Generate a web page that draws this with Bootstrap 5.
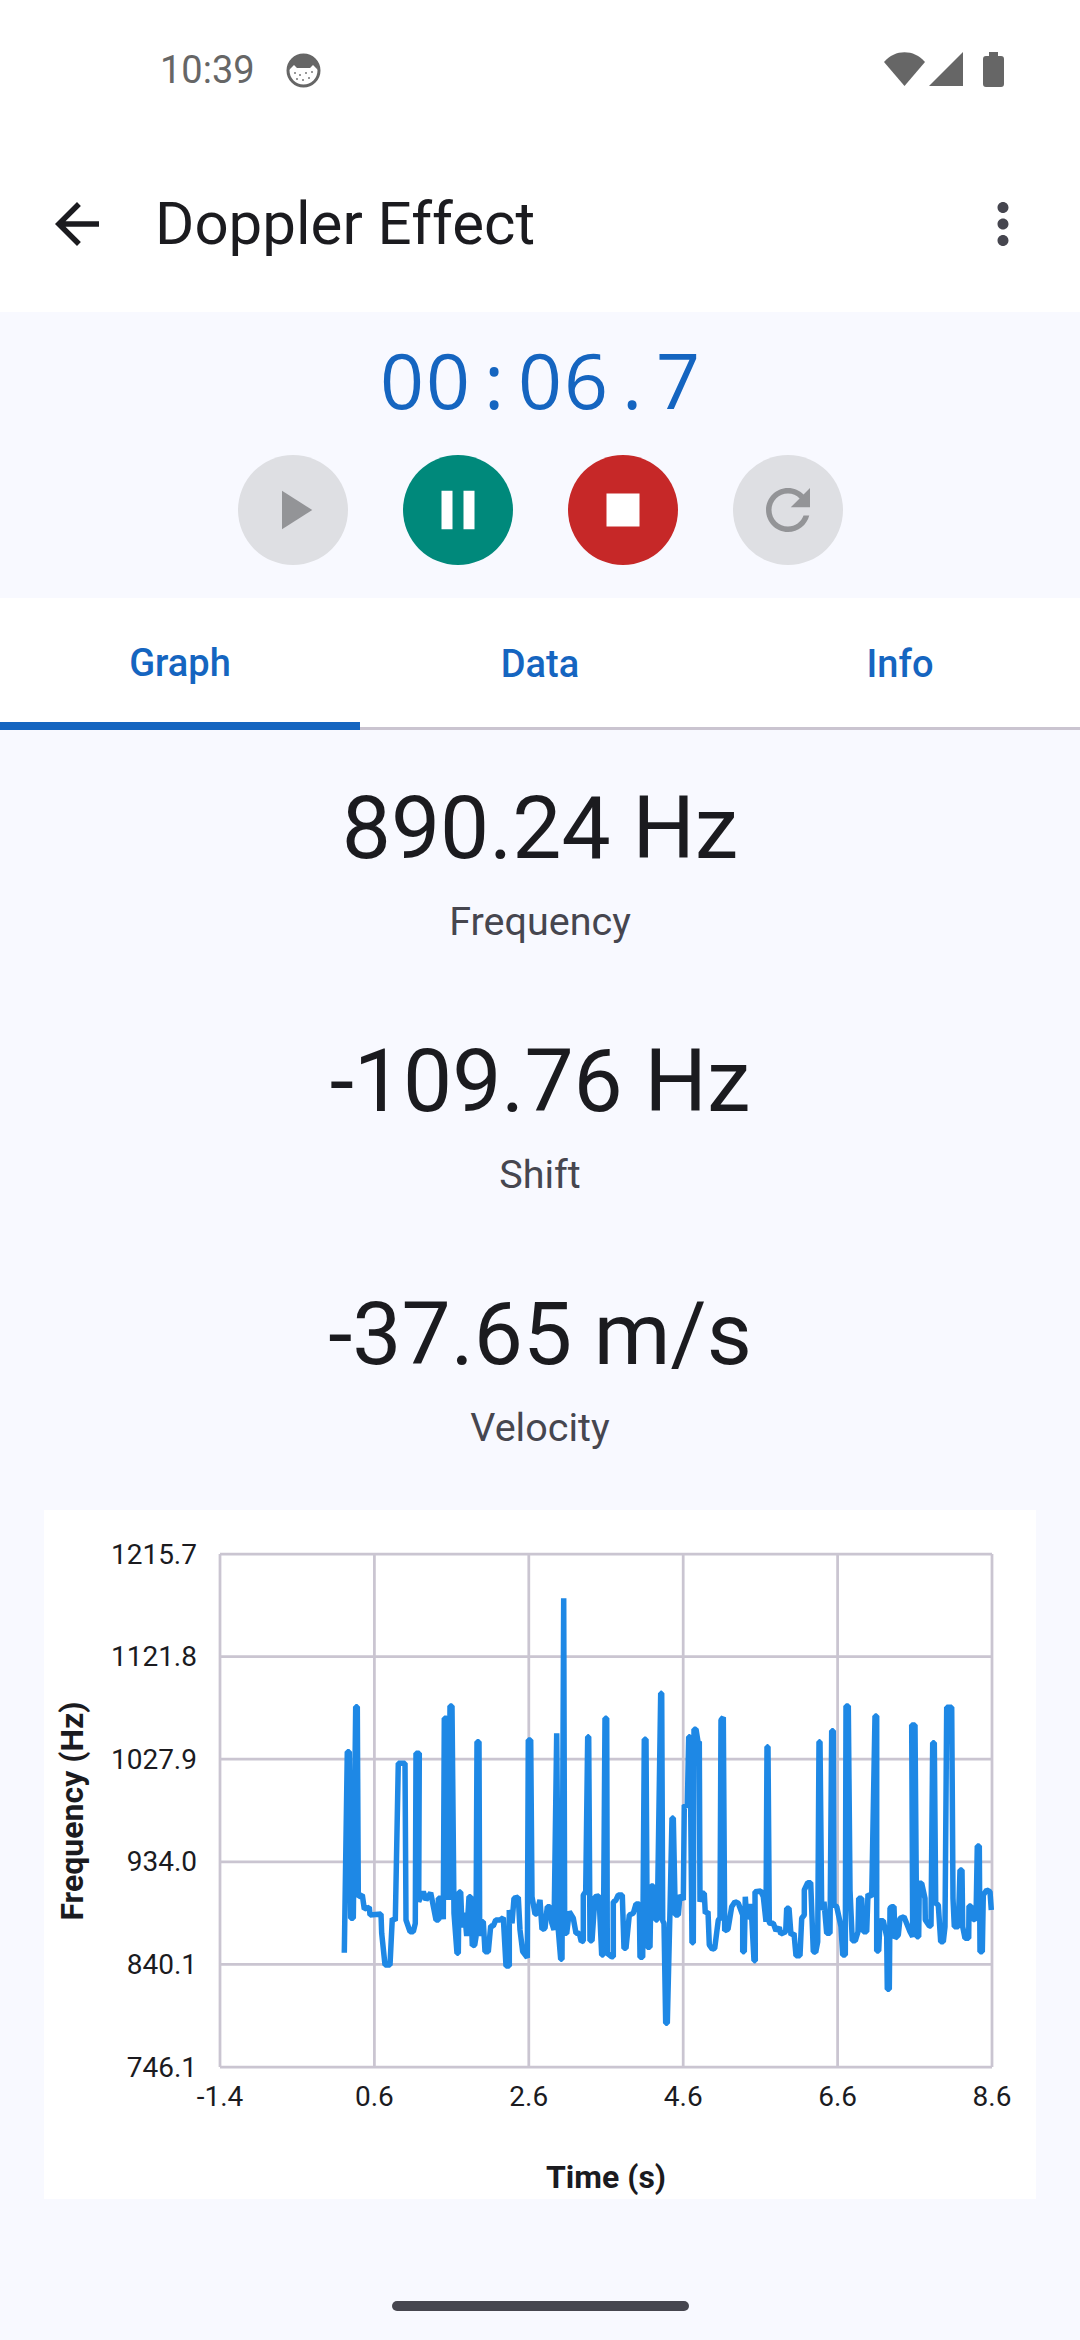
<!DOCTYPE html>
<html lang="en">
<head>
  <meta charset="UTF-8">
  <meta name="viewport" content="width=device-width, initial-scale=1.0">
  <title>Doppler Effect</title>
  <link href="https://cdn.jsdelivr.net/npm/bootstrap@5.3.3/dist/css/bootstrap.min.css" rel="stylesheet"/>
  <style>
    body { width: 1080px; height: 2340px; overflow: hidden; background: #f8f9ff; font-family: Roboto, sans-serif; color: #1b1b1f; }
    .status-bar { height: 140px; padding: 0 76px 0 160px; background: #fff; color: #666; }
    .status-time { font-size: 38px; font-weight: 400; line-height: 1; margin-right: 31px; }
    .app-bar { height: 172px; background: #fff; padding: 0 44px 4px 44px; }
    .app-title { font-size: 60px; line-height: 1; margin: 0 0 0 45px; font-weight: 400; }
    .ico-66 { width: 66px; height: 66px; display: block; }
    .timer-panel { height: 286px; }
    .clock { height: 143px; color: #1565c0; font-family: "Open Sans", sans-serif; font-size: 77px; font-weight: 500; line-height: 1; padding-bottom: 8px; }
    .clock span { width: 46px; text-align: center; }
    .btn-round { width: 110px; height: 110px; padding: 0; border: 0; border-radius: 50%; display: flex; align-items: center; justify-content: center; }
    .btn-off { background: #dedfe3; fill: #939497; }
    .btn-pause { background: #00897b; fill: #fff; }
    .btn-stop { background: #c62828; fill: #fff; }
    .gap-55 { gap: 55px; }
    .tab-strip { height: 132px; background: #fff; border-bottom: 3px solid #cac4d0; }
    .tab-strip .nav-link { height: 132px; padding: 7px 0; border-radius: 0; color: #1565c0; font-size: 38px; font-weight: 500; display: flex; align-items: center; justify-content: center; background: transparent; }
    .tab-strip .nav-link.active { border-bottom: 8px solid #1565c0; padding-bottom: 0; color: #1565c0; background: transparent; }
    .stats { padding-top: 48px; }
    .stat-block { margin-bottom: 84px; text-align: center; }
    .stat-block:last-child { margin-bottom: 0; }
    .stat-value { font-size: 87.500px; line-height: 100px; height: 100px; }
    .stat-label { font-size: 39.500px; line-height: 50px; height: 50px; margin-top: 19px; color: #46464f; }
    .chart-box { width: 992px; height: 689px; margin: 57px 0 0 44px; background: #fff; border: 0; border-radius: 0; }
    .chart-box svg { display: block; }
    .grid-line { stroke: #cac5d1; stroke-width: 2.750; fill: none; }
    .tick { font-family: Roboto, sans-serif; font-size: 28px; fill: #1b1b1f; }
    .axis-title { font-family: Roboto, sans-serif; font-size: 32px; font-weight: 700; fill: #1b1b1f; }
    .data-line { fill: none; stroke: #1e88e5; stroke-width: 5.500; stroke-linejoin: bevel; }
    .home-handle { width: 297px; height: 10px; margin: 102px auto 0; background: #46464f; border-radius: 5px; }
  </style>
</head>
<body>

  <div class="status-bar d-flex align-items-center">
    <span class="status-time">10:39</span>
    <svg width="35" height="35" viewBox="0 0 35 35">
      <circle cx="17.500" cy="17.500" r="15.500" fill="#fff" stroke="#666" stroke-width="3"/>
      <path d="M3 17 C3 6 10 2 17.500 2 C25 2 32 6 32 17 L27 12 L24 15 L11 15 L8 12 Z" fill="#666"/>
      <g fill="#777">
        <circle cx="9" cy="20" r="1"/><circle cx="14" cy="22" r="1"/><circle cx="20" cy="20" r="1"/><circle cx="26" cy="19" r="1"/>
        <circle cx="11" cy="26" r="1"/><circle cx="17" cy="27" r="1"/><circle cx="23" cy="25" r="1"/>
      </g>
    </svg>
    <div class="ms-auto d-flex align-items-start">
      <svg width="120" height="36" viewBox="0 0 120 36" fill="#666">
        <path d="M0 10 C11 -3 30 -3 41 10 L20.500 34 Z"/>
        <path d="M79 0 V34 H45 Z"/>
        <path d="M105 0 H114 V4 H117 Q120 4 120 7 V32 Q120 35 117 35 H102 Q99 35 99 32 V7 Q99 4 102 4 H105 Z"/>
      </svg>
    </div>
  </div>

  <div class="app-bar d-flex align-items-center">
    <svg class="ico-66" viewBox="0 0 24 24" fill="#1b1b1f"><path d="M20 11H7.830l5.590-5.590L12 4l-8 8 8 8 1.410-1.410L7.830 13H20v-2z"/></svg>
    <h1 class="app-title">Doppler Effect</h1>
    <svg class="ico-66 ms-auto" viewBox="0 0 24 24" fill="#46464f"><path d="M12 8c1.100 0 2-.9 2-2s-.9-2-2-2-2 .9-2 2 .9 2 2 2zm0 2c-1.100 0-2 .9-2 2s.9 2 2 2 2-.9 2-2-.9-2-2-2zm0 6c-1.100 0-2 .9-2 2s.9 2 2 2 2-.9 2-2-.9-2-2-2z"/></svg>
  </div>

  <div class="timer-panel">
    <div class="clock d-flex justify-content-center align-items-center">
      <span>0</span><span>0</span><span>:</span><span>0</span><span>6</span><span>.</span><span>7</span>
    </div>
    <div class="d-flex justify-content-center gap-55">
      <button class="btn-round btn-off" type="button"><svg class="ico-66" viewBox="0 0 24 24"><path d="M8 5v14l11-7z"/></svg></button>
      <button class="btn-round btn-pause" type="button"><svg class="ico-66" viewBox="0 0 24 24"><path d="M6 19h4V5H6v14zm8-14v14h4V5h-4z"/></svg></button>
      <button class="btn-round btn-stop" type="button"><svg class="ico-66" viewBox="0 0 24 24"><path d="M6 6h12v12H6z"/></svg></button>
      <button class="btn-round btn-off" type="button"><svg class="ico-66" viewBox="0 0 24 24"><path d="M17.650 6.350C16.200 4.900 14.210 4 12 4c-4.420 0-7.990 3.580-7.990 8s3.570 8 7.990 8c3.730 0 6.840-2.550 7.730-6h-2.080c-.82 2.330-3.040 4-5.650 4-3.310 0-6-2.690-6-6s2.690-6 6-6c1.660 0 3.140.69 4.220 1.780L13 11h7V4l-2.350 2.350z"/></svg></button>
    </div>
  </div>

  <ul class="nav nav-justified tab-strip">
    <li class="nav-item"><a class="nav-link active" href="#">Graph</a></li>
    <li class="nav-item"><a class="nav-link" href="#">Data</a></li>
    <li class="nav-item"><a class="nav-link" href="#">Info</a></li>
  </ul>

  <div class="stats">
    <div class="stat-block"><div class="stat-value">890.24 Hz</div><div class="stat-label">Frequency</div></div>
    <div class="stat-block"><div class="stat-value">-109.76 Hz</div><div class="stat-label">Shift</div></div>
    <div class="stat-block"><div class="stat-value">-37.65 m/s</div><div class="stat-label">Velocity</div></div>
  </div>

  <div class="card chart-box">
    <svg id="chart" width="992" height="689" viewBox="0 0 992 689"></svg>
  </div>

  <div class="home-handle"></div>

  <script>
    const NS = 'http://www.w3.org/2000/svg';
    const chart = document.getElementById('chart');

    // plot area in the box's own pixels
    const plot = { left: 176, right: 948, top: 44, bottom: 557 };
    const xLabels = ['-1.4', '0.6', '2.6', '4.6', '6.6', '8.6'];
    const yLabels = ['1215.7', '1121.8', '1027.9', '934.0', '840.1', '746.1'];

    function add(tag, attrs, text) {
      const el = document.createElementNS(NS, tag);
      Object.keys(attrs).forEach(k => el.setAttribute(k, attrs[k]));
      if (text) el.textContent = text;
      chart.appendChild(el);
      return el;
    }

    xLabels.forEach((label, i) => {
      const x = plot.left + (plot.right - plot.left) * i / 5;
      add('line', { class: 'grid-line', x1: x, x2: x, y1: plot.top, y2: plot.bottom });
      add('text', { class: 'tick', x: x, y: 596, 'text-anchor': 'middle' }, label);
    });
    yLabels.forEach((label, i) => {
      const y = plot.top + (plot.bottom - plot.top) * i / 5;
      add('line', { class: 'grid-line', x1: plot.left, x2: plot.right, y1: y, y2: y });
      add('text', { class: 'tick', x: 153, y: y + 9.500, 'text-anchor': 'end' }, label);
    });
    add('text', { class: 'axis-title', x: 562, y: 678, 'text-anchor': 'middle' }, 'Time (s)');
    add('text', { class: 'axis-title', x: 0, y: 0, 'text-anchor': 'middle', transform: 'translate(39 301) rotate(-90)' }, 'Frequency (Hz)');

    // traced in three runs, each relative to its own origin at 3x
    const runs = [
      { x: 330, y: 1690, pts: [43,788,52,185,58,185,62,685,70,685,77,50,82,50,85,620,97,615,103,657,118,652,120,675,153,672,155,730,165,825,180,825,187,685,196,692,205,220,225,220,228,690,240,725,250,725,256,700,258,190,268,190,266,635,280,605,288,630,302,608,318,690,326,690,325,625,334,625,340,688,343,85,350,85,356,630,360,48,366,48,372,670,381,790,385,790,387,606,392,606,396,712,404,668,410,738,417,620,422,620,427,767,434,765,438,740,441,155,447,155,449,738,452,695,460,695,465,785,475,785,482,708,490,708,497,690,510,690,520,683,528,828,538,828,538,660,546,700,552,625,565,622,570,720,578,785,592,803,595,150,602,150,606,620,615,672,620,672,630,630,636,718,645,715,652,650,660,650,665,698,672,720,680,130,685,720,692,808] },
      { x: 550, y: 1590, pts: [36,1108,41,25,44,1030,50,1030,58,965,70,985,78,1030,88,1030,94,1055,100,1052,100,915,107,905,113,440,116,440,120,1052,126,1052,135,920,147,918,155,1095,160,1095,165,385,170,385,172,1090,185,1100,190,1100,190,935,197,932,205,915,217,915,222,1075,228,1075,238,975,250,970,258,942,268,942,270,1102,278,1102,283,448,288,448,292,1072,300,1072,303,888,310,888,317,990,322,990,332,310,335,310,338,992,342,1000,347,1300,352,1300,360,960,366,684,370,684,376,975,385,975,390,915,400,930,403,645,412,650,416,440,420,440,426,1058,430,1058,432,418,438,418,444,455,448,455,450,935,458,910,463,910,466,970,474,965,478,1065,487,1078,494,1075,505,990,510,985,513,390,520,382,524,1022,534,1018,545,950,555,935,565,940,578,975,578,1085,583,1085,586,920,590,985,600,970,603,942,612,1112,616,1112,615,905,632,903,640,920,648,995,651,470,654,470,658,998] },
      { x: 770, y: 1690, pts: [0,700,10,700,18,722,28,712,32,732,47,725,50,655,57,655,63,735,72,730,78,797,90,797,95,685,103,675,103,600,113,578,122,578,130,785,137,787,143,755,147,155,150,155,155,660,162,635,170,730,180,730,185,122,190,122,192,645,200,650,213,710,218,795,226,795,228,48,235,48,240,600,247,752,256,752,264,725,266,625,275,625,280,725,290,725,294,612,305,620,315,78,320,78,320,783,326,783,330,692,340,692,350,740,352,898,358,898,360,655,365,650,372,650,375,745,385,735,390,685,402,680,420,725,428,740,425,105,435,105,440,740,446,740,448,580,455,580,465,625,466,690,478,708,483,708,488,158,493,158,497,640,505,645,512,755,520,755,525,710,530,52,545,52,549,625,553,710,565,710,570,540,576,540,578,710,585,745,596,745,597,648,603,648,608,690,618,685,622,468,628,468,630,785,637,785,640,615,650,600,660,605,664,660] }
    ];

    const boxX = 44, boxY = 1510;
    let points = [];
    runs.forEach(run => {
      for (let i = 0; i < run.pts.length; i += 2) {
        const px = run.x + run.pts[i] / 3 - boxX;
        const py = run.y + run.pts[i + 1] / 3 - boxY;
        points.push(px.toFixed(1) + ',' + py.toFixed(1));
      }
    });
    add('polyline', { class: 'data-line', points: points.join(' ') });
  </script>
  <script src="https://cdn.jsdelivr.net/npm/bootstrap@5.3.3/dist/js/bootstrap.bundle.min.js"></script>
</body>
</html>
